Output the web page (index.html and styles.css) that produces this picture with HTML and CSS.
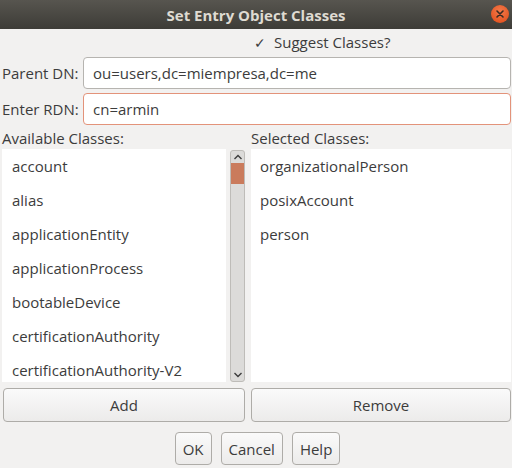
FILE: index.html
```html
<!DOCTYPE html>
<html>
<head>
<meta charset="utf-8">
<link rel="stylesheet" href="styles.css">
</head>
<body>
<div class="window">
  <div class="titlebar">
    <span class="title">Set Entry Object Classes</span>
    <span class="close"><svg width="10" height="10" viewBox="0 0 10 10"><path d="M2 2L8 8M8 2L2 8" stroke="#3a2a22" stroke-width="1.6" stroke-linecap="round"/></svg></span>
  </div>
  <div class="content">
    <div class="suggest"><span class="check">✓</span><span>Suggest Classes?</span></div>
    <div class="field">
      <label class="flabel">Parent DN:</label>
      <div class="input">ou=users,dc=miempresa,dc=me</div>
    </div>
    <div class="field">
      <label class="flabel">Enter RDN:</label>
      <div class="input focus">cn=armin</div>
    </div>
    <div class="lists">
      <div class="col">
        <div class="clabel">Available Classes:</div>
        <div class="listwrap">
          <ul class="list">
            <li>account</li>
            <li>alias</li>
            <li>applicationEntity</li>
            <li>applicationProcess</li>
            <li>bootableDevice</li>
            <li>certificationAuthority</li>
            <li>certificationAuthority-V2</li>
          </ul>
          <div class="scrollbar">
            <div class="arrow"><svg width="10" height="6" viewBox="0 0 10 6"><path d="M1.5 5L5 1.5L8.5 5" fill="none" stroke="#3c3c3c" stroke-width="1.4"/></svg></div>
            <div class="thumb"></div>
            <div class="track"></div>
            <div class="arrow"><svg width="10" height="6" viewBox="0 0 10 6"><path d="M1.5 1L5 4.5L8.5 1" fill="none" stroke="#3c3c3c" stroke-width="1.4"/></svg></div>
          </div>
        </div>
        <button class="btn wide">Add</button>
      </div>
      <div class="col">
        <div class="clabel">Selected Classes:</div>
        <ul class="list right">
          <li>organizationalPerson</li>
          <li>posixAccount</li>
          <li>person</li>
        </ul>
        <button class="btn wide">Remove</button>
      </div>
    </div>
    <div class="actions">
      <button class="btn small">OK</button>
      <button class="btn small">Cancel</button>
      <button class="btn small">Help</button>
    </div>
  </div>
</div>
</body>
</html>
```
FILE: styles.css
```css
* { box-sizing: border-box; }
html, body { margin: 0; padding: 0; }
body {
  width: 512px;
  height: 468px;
  overflow: hidden;
  background: #f2f1f0;
  font-family: "Open Sans", "Noto Sans", sans-serif;
  font-size: 15px;
  color: #3c3c3c;
}
.window { width: 512px; height: 468px; display: flex; flex-direction: column; }
.titlebar {
  height: 29px;
  background: linear-gradient(#57554f, #3d3c37);
  display: flex;
  align-items: center;
  justify-content: center;
  position: relative;
}
.title { color: #dfdbd2; font-weight: bold; font-size: 15px; }
.close {
  position: absolute;
  right: 3px;
  top: 5px;
  width: 18px;
  height: 18px;
  border-radius: 50%;
  background: radial-gradient(circle at 50% 35%, #f47a4a, #de4a17);
  display: flex;
  align-items: center;
  justify-content: center;
}
.content { flex: 1; display: flex; flex-direction: column; padding: 0 1px 0 2px; }
.suggest { height: 26px; display: flex; align-items: center; padding-left: 252px; gap: 8px; }
.check { font-size: 14px; }
.field { display: flex; align-items: center; height: 36px; }
.flabel { width: 81px; white-space: nowrap; }
.input {
  flex: 1;
  height: 32px;
  border: 1px solid #b6b4b0;
  border-radius: 4px;
  background: #fff;
  display: flex;
  align-items: center;
  padding-left: 9px;
  color: #3c3c3c;
}
.input.focus { border-color: #e3937a; }
.lists { display: flex; gap: 6px; }
.col { display: flex; flex-direction: column; }
.col:first-child { width: 243px; }
.col:last-child { flex: 1; }
.clabel { height: 22px; display: flex; align-items: center; }
.listwrap { display: flex; height: 233px; }
.list {
  list-style: none;
  margin: 0;
  padding: 0;
  background: #fff;
  height: 233px;
  overflow: hidden;
}
.listwrap .list { width: 226px; }
.list li { height: 34px; line-height: 34px; padding-left: 10px; white-space: nowrap; }
.list.right li { padding-left: 9px; }
.scrollbar {
  margin-left: 4px;
  width: 15px;
  border: 1px solid #bebcb8;
  border-radius: 3px;
  background: #dcdbd9;
  display: flex;
  flex-direction: column;
  margin-top: 1px;
}
.arrow { height: 12px; display: flex; align-items: center; justify-content: center; }
.thumb { height: 21px; background: #ca7b5c; }
.track { flex: 1; }
.btn {
  font-family: inherit;
  font-size: 15px;
  color: #3c3c3c;
  border: 1px solid #aeaca8;
  border-radius: 4px;
  background: linear-gradient(#fafafa, #ecebea);
}
.wide { height: 34px; margin-top: 6px; }
.col:first-child .wide { margin-left: 1px; }
.actions { display: flex; justify-content: center; gap: 9px; margin-top: 10px; padding-left: 2px; }
.small { height: 33px; padding: 0 7px; }
```
